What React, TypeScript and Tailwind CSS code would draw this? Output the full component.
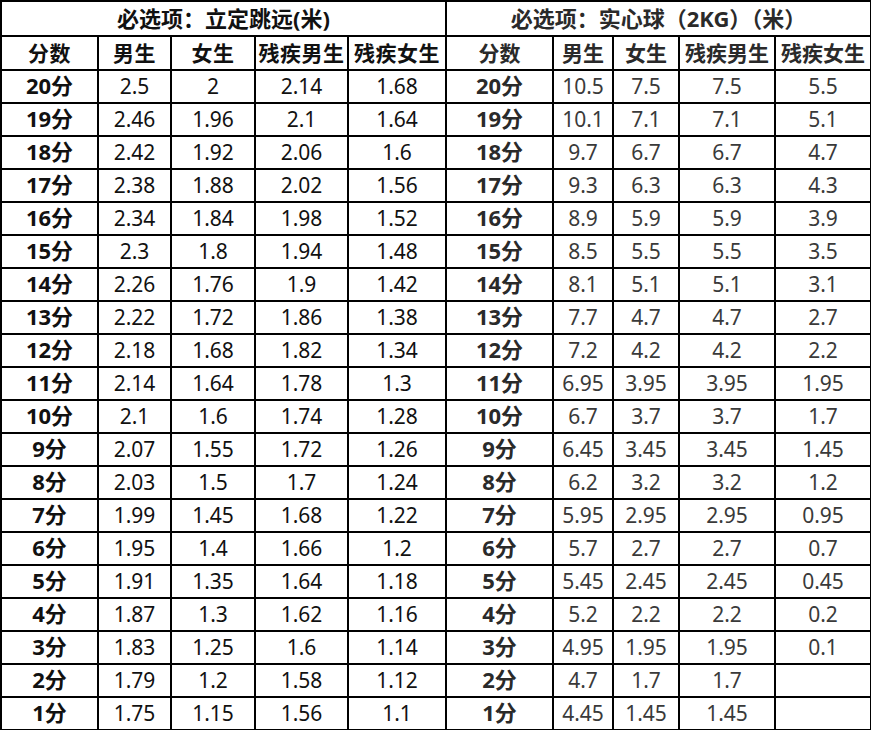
const rows: [string, string[], string[]][] = [
  ["20分", ["2.5", "2", "2.14", "1.68"], ["10.5", "7.5", "7.5", "5.5"]],
  ["19分", ["2.46", "1.96", "2.1", "1.64"], ["10.1", "7.1", "7.1", "5.1"]],
  ["18分", ["2.42", "1.92", "2.06", "1.6"], ["9.7", "6.7", "6.7", "4.7"]],
  ["17分", ["2.38", "1.88", "2.02", "1.56"], ["9.3", "6.3", "6.3", "4.3"]],
  ["16分", ["2.34", "1.84", "1.98", "1.52"], ["8.9", "5.9", "5.9", "3.9"]],
  ["15分", ["2.3", "1.8", "1.94", "1.48"], ["8.5", "5.5", "5.5", "3.5"]],
  ["14分", ["2.26", "1.76", "1.9", "1.42"], ["8.1", "5.1", "5.1", "3.1"]],
  ["13分", ["2.22", "1.72", "1.86", "1.38"], ["7.7", "4.7", "4.7", "2.7"]],
  ["12分", ["2.18", "1.68", "1.82", "1.34"], ["7.2", "4.2", "4.2", "2.2"]],
  ["11分", ["2.14", "1.64", "1.78", "1.3"], ["6.95", "3.95", "3.95", "1.95"]],
  ["10分", ["2.1", "1.6", "1.74", "1.28"], ["6.7", "3.7", "3.7", "1.7"]],
  ["9分", ["2.07", "1.55", "1.72", "1.26"], ["6.45", "3.45", "3.45", "1.45"]],
  ["8分", ["2.03", "1.5", "1.7", "1.24"], ["6.2", "3.2", "3.2", "1.2"]],
  ["7分", ["1.99", "1.45", "1.68", "1.22"], ["5.95", "2.95", "2.95", "0.95"]],
  ["6分", ["1.95", "1.4", "1.66", "1.2"], ["5.7", "2.7", "2.7", "0.7"]],
  ["5分", ["1.91", "1.35", "1.64", "1.18"], ["5.45", "2.45", "2.45", "0.45"]],
  ["4分", ["1.87", "1.3", "1.62", "1.16"], ["5.2", "2.2", "2.2", "0.2"]],
  ["3分", ["1.83", "1.25", "1.6", "1.14"], ["4.95", "1.95", "1.95", "0.1"]],
  ["2分", ["1.79", "1.2", "1.58", "1.12"], ["4.7", "1.7", "1.7", ""]],
  ["1分", ["1.75", "1.15", "1.56", "1.1"], ["4.45", "1.45", "1.45", ""]],
];

const headers = ["分数", "男生", "女生", "残疾男生", "残疾女生"];
const widths = ["w-[97px]", "w-[73px]", "w-[84px]", "w-[93px]", "w-[98px]", "w-[107px]", "w-[60px]", "w-[66px]", "w-[96px]", "w-[96px]"];

const cell = "border-2 border-black p-0 text-center leading-none whitespace-nowrap";

export default function App() {
  return (
    <div className="w-[871px] h-[730px] overflow-hidden bg-white font-['Noto_Sans','Noto_Sans_CJK_SC',sans-serif]">
      <table className="table-fixed border-collapse w-[870px]">
        <colgroup>
          {widths.map((w, i) => (
            <col key={i} className={w} />
          ))}
        </colgroup>
        <tbody>
          <tr className="h-[35px]">
            <td colSpan={5} className={`${cell} pb-[2px] text-[22px] font-bold text-[#111]`}>
              必选项：立定跳远(米)
            </td>
            <td colSpan={5} className={`${cell} pb-[2px] text-[22px] font-bold text-[#2a2a2a]`}>
              必选项：实心球（2KG）（米）
            </td>
          </tr>
          <tr className="h-[34px]">
            {headers.map((h) => (
              <td key={"l" + h} className={`${cell} text-[21px] font-bold tracking-[0.5px] text-[#111]`}>
                {h}
              </td>
            ))}
            {headers.map((h) => (
              <td key={"r" + h} className={`${cell} text-[21px] font-bold text-[#2a2a2a]`}>
                {h}
              </td>
            ))}
          </tr>
          {rows.map(([score, left, right]) => (
            <tr key={score} className="h-[33px]">
              <td className={`${cell} pb-[3px] text-[22px] font-bold text-[#111]`}>{score}</td>
              {left.map((v, i) => (
                <td key={i} className={`${cell} text-[21px] text-[#111]`}>
                  {v}
                </td>
              ))}
              <td className={`${cell} pb-[3px] text-[22px] font-bold text-[#2a2a2a]`}>{score}</td>
              {right.map((v, i) => (
                <td key={i} className={`${cell} text-[21px] text-[#3a3a3a]`}>
                  {v}
                </td>
              ))}
            </tr>
          ))}
        </tbody>
      </table>
    </div>
  );
}
